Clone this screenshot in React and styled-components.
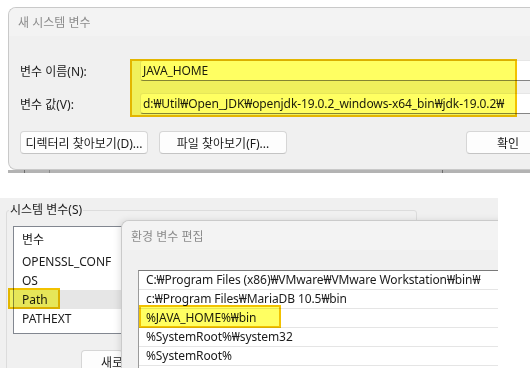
import styled, { createGlobalStyle } from 'styled-components';

const GlobalStyle = createGlobalStyle`
  html, body {
    margin: 0;
    padding: 0;
    background: #fff;
    overflow: hidden;
  }
  body {
    font-family: "Noto Sans", "Noto Sans CJK KR", sans-serif;
    font-size: 12px;
    color: #1b1b1b;
  }
  * {
    box-sizing: border-box;
  }
`;

const Page = styled.div`
  position: relative;
  width: 530px;
  height: 379px;
  overflow: hidden;
`;

/* ---------- top: 새 시스템 변수 dialog ---------- */

const TopArea = styled.section`
  padding: 7px 0 0 8px;
`;

const Dialog = styled.div`
  width: 560px;
  height: 163px;
  background: #f0f0f0;
  border: 1px solid #c9c9c9;
  border-right: none;
  border-radius: 8px 0 0 8px;
  overflow: hidden;
  display: flex;
  flex-direction: column;
`;

const TitleBar = styled.div`
  flex: none;
  height: ${(p) => p.$height}px;
  background: #f3f3f3;
  color: #8c8c8c;
  padding-left: ${(p) => p.$pad}px;
  display: flex;
  align-items: center;
  white-space: nowrap;
`;

const DialogBody = styled.div`
  padding: 24px 18px 0 11px;
`;

const Form = styled.div`
  display: grid;
  grid-template-columns: 120px 1fr;
  row-gap: 12px;
  align-items: center;
`;

const Label = styled.label`
  white-space: nowrap;
`;

const Field = styled.div`
  height: 21px;
  background: #fff;
  border: 1px solid #e6e6e6;
  border-bottom: 1px solid #858585;
  border-radius: 3px;
  padding-left: 2px;
  display: flex;
  align-items: center;
  white-space: nowrap;
  overflow: hidden;
  letter-spacing: -0.1px;
`;

const ButtonRow = styled.div`
  display: flex;
  gap: 11px;
  margin-top: 17px;
`;

const Button = styled.button`
  flex: none;
  width: ${(p) => p.$width}px;
  height: 23px;
  margin-left: ${(p) => (p.$pushRight ? 'auto' : '0')};
  padding: 0 0 0 ${(p) => p.$indent || 0}px;
  text-align: ${(p) => (p.$indent ? 'left' : 'center')};
  background: #fdfdfd;
  border: 1px solid #d6d6d6;
  border-bottom-color: #c4c4c4;
  border-radius: 4px;
  font: inherit;
  color: #1b1b1b;
  white-space: nowrap;
  overflow: hidden;
`;

const UnderEdge = styled.div`
  margin-left: 8px;
  height: 3px;
  background:
    linear-gradient(90deg,
      transparent 16px, #6d6d6d 16px, #6d6d6d 17px, transparent 17px,
      transparent 41px, #8a8a8a 41px, #8a8a8a 42px, transparent 42px,
      transparent 434px, #6d6d6d 434px, #6d6d6d 435px, transparent 435px),
    #b3b3b3;
`;

/* ---------- bottom: 시스템 변수 + 환경 변수 편집 ---------- */

const BottomArea = styled.section`
  margin-top: 25px;
`;

const BackWindow = styled.div`
  position: relative;
  width: 498px;
  height: 170px;
  background: #f0f0f0;
  overflow: hidden;
  padding-left: 6px;
`;

const GroupBox = styled.fieldset`
  width: 411px;
  height: 200px;
  margin: 4px 0 0 0;
  padding: 0 0 0 6px;
  border: 1px solid #dcdcdc;
  border-radius: 3px;
`;

const Legend = styled.legend`
  margin-left: -4px;
  padding: 0 1px;
  line-height: 16px;
`;

const VarList = styled.div`
  width: 160px;
  height: 108px;
  margin-top: 8px;
  background: #fff;
  border: 1px solid #828790;
`;

const ListHeader = styled.div`
  height: 25px;
  padding: 3px 0 0 8px;
  line-height: 19px;
`;

const VarRow = styled.div`
  height: 19px;
  line-height: 19px;
  padding-left: 8px;
  background: ${(p) => (p.$selected ? '#e6e6e6' : 'transparent')};
`;

const BackButtons = styled.div`
  display: flex;
  padding-left: 68px;
  margin-top: 16px;
`;

const EditDialog = styled.div`
  position: absolute;
  left: 121px;
  top: 22px;
  width: 400px;
  height: 160px;
  background: #f0f0f0;
  border: 1px solid #cacaca;
  border-right: none;
  border-radius: 8px 0 0 0;
  box-shadow: -2px 0 6px rgba(0, 0, 0, 0.1);
  overflow: hidden;
  display: flex;
  flex-direction: column;
  z-index: 2;
`;

const EditBody = styled.div`
  padding: 20px 0 0 16px;
`;

const PathList = styled.div`
  background: #fff;
  border-top: 1px solid #7a7a7a;
  border-left: 1px solid #9a9a9a;
`;

const PathRow = styled.div`
  height: 19px;
  line-height: 18px;
  padding-left: 7px;
  border-bottom: 1px solid #e5e5e5;
  white-space: nowrap;
  letter-spacing: -0.1px;
`;

/* ---------- yellow marker highlights ---------- */

const Highlight = styled.div`
  position: absolute;
  left: ${(p) => p.$x}px;
  top: ${(p) => p.$y}px;
  width: ${(p) => p.$w}px;
  height: ${(p) => p.$h}px;
  background: #ffff62;
  border: 2px solid #f2c200;
  mix-blend-mode: multiply;
  pointer-events: none;
  z-index: 5;
`;

const sysVars = ['OPENSSL_CONF', 'OS', 'Path', 'PATHEXT'];

const paths = [
  'C:₩Program Files (x86)₩VMware₩VMware Workstation₩bin₩',
  'c:₩Program Files₩MariaDB 10.5₩bin',
  '%JAVA_HOME%₩bin',
  '%SystemRoot%₩system32',
  '%SystemRoot%',
  '',
];

export default function App() {
  return (
    <Page>
      <GlobalStyle />
      <TopArea>
        <Dialog>
          <TitleBar $height={28} $pad={9}>새 시스템 변수</TitleBar>
          <DialogBody>
            <Form>
              <Label>변수 이름(N):</Label>
              <Field>JAVA_HOME</Field>
              <Label>변수 값(V):</Label>
              <Field>d:₩Util₩Open_JDK₩openjdk-19.0.2_windows-x64_bin₩jdk-19.0.2₩</Field>
            </Form>
            <ButtonRow>
              <Button $width={128}>디렉터리 찾아보기(D)...</Button>
              <Button $width={128}>파일 찾아보기(F)...</Button>
              <Button $width={84} $pushRight>확인</Button>
            </ButtonRow>
          </DialogBody>
        </Dialog>
      </TopArea>
      <UnderEdge />

      <BottomArea>
        <BackWindow>
          <GroupBox>
            <Legend>시스템 변수(S)</Legend>
            <VarList>
              <ListHeader>변수</ListHeader>
              {sysVars.map((v) => (
                <VarRow key={v} $selected={v === 'Path'}>
                  {v}
                </VarRow>
              ))}
            </VarList>
            <BackButtons>
              <Button $width={42} $indent={19}>새로</Button>
            </BackButtons>
          </GroupBox>

          <EditDialog>
            <TitleBar $height={29} $pad={9}>환경 변수 편집</TitleBar>
            <EditBody>
              <PathList>
                {paths.map((p, i) => (
                  <PathRow key={i}>{p}</PathRow>
                ))}
              </PathList>
            </EditBody>
          </EditDialog>
        </BackWindow>
      </BottomArea>

      <Highlight $x={130} $y={59} $w={387} $h={58} />
      <Highlight $x={8} $y={288} $w={52} $h={21} />
      <Highlight $x={139} $y={305} $w={142} $h={23} />
    </Page>
  );
}
